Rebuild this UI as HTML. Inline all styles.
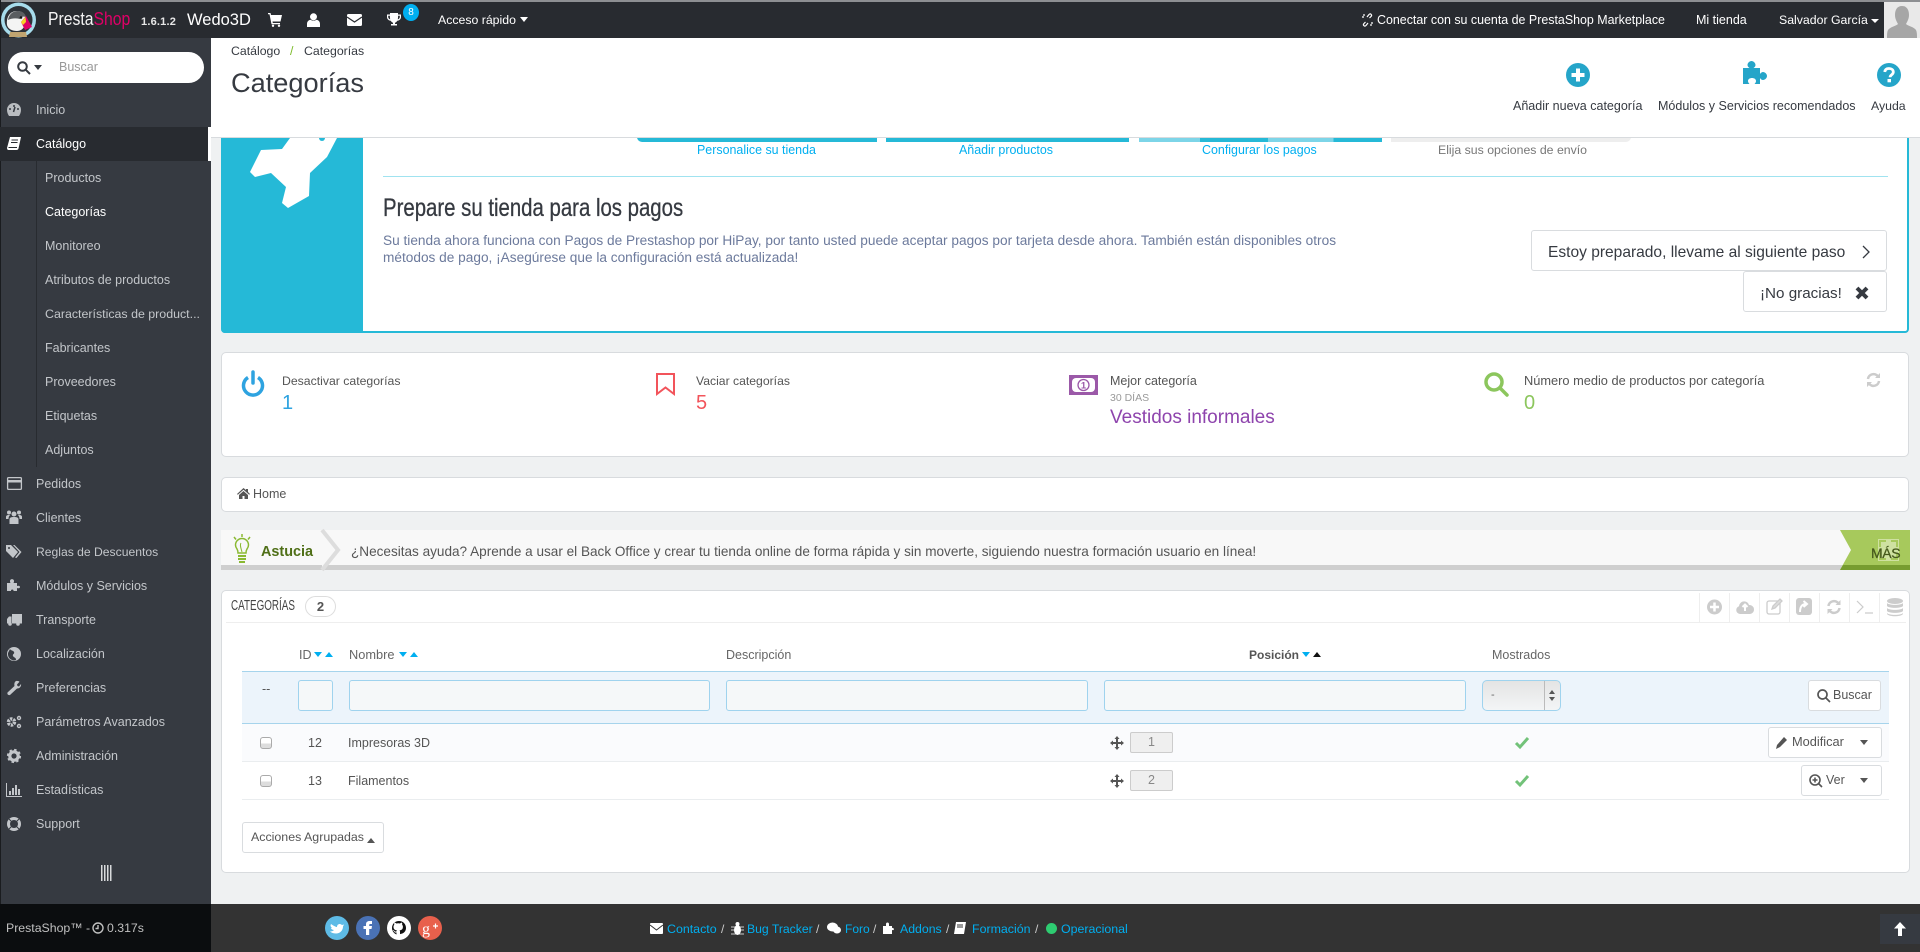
<!DOCTYPE html>
<html lang="es"><head><meta charset="utf-8"><title>Categorías</title>
<style>
html,body{margin:0;padding:0;width:1920px;height:952px;overflow:hidden;background:#eff1f2;font-family:"Liberation Sans",sans-serif;color:#555}
.a{position:absolute}
.t{position:absolute;white-space:nowrap;line-height:20px;height:20px;font-size:12.5px}
svg{position:absolute;overflow:visible}
.side{color:#c3c6ca;font-size:12.5px}
.panel{position:absolute;background:#fff;border:1px solid #d8dbde;border-radius:5px;box-sizing:border-box}
.inp{position:absolute;top:680px;height:31px;background:#f5f8f9;border:1px solid #9fd3ee;border-radius:3px;box-sizing:border-box}
.btn{position:absolute;background:#fff;border:1px solid #d9dcdf;border-radius:3px;box-sizing:border-box}
.lnk{color:#00aff0}
</style></head><body>

<!-- header -->
<div class="a" style="left:0;top:0;width:1920px;height:38px;background:#282b30"></div>
<div class="a" style="left:0;top:0;width:1920px;height:2px;background:#8d8f92"></div>
<svg style="left:0;top:0" width="40" height="40" viewBox="0 0 40 40">
<circle cx="18.500" cy="20" r="17.500" fill="#a7dcec"/><circle cx="18.500" cy="20" r="14" fill="#2e3238"/>
<path d="M7 25c-1-8 3-14 10-14 6 0 9 4 9 9 0 5-3 11-9 11-5 0-9-2-10-6z" fill="#f4f4f4"/>
<path d="M8 20c1-6 5-9 10-9 4 0 7 2 8 6-3-1-5 0-6 2-4-1-8-1-12 1z" fill="#5a5d60"/>
<circle cx="21" cy="17.500" r="1.300" fill="#111"/>
<path d="M21 22l5-6 6 11-7 3z" fill="#df0067"/><path d="M21 22l4.500-5 .5 5-3 3z" fill="#f5d327"/>
<path d="M10 32h16l1 5H9z" fill="#c0a470"/></svg>
<div class="t" style="left:48px;top:9px;font-size:18px;color:#f4f4f4;transform:scaleX(.875);transform-origin:0 50%">Presta<span style="color:#df0067">Shop</span></div>
<div class="t" style="left:141px;top:12px;font-size:11px;font-weight:bold;color:#e8e8e8;letter-spacing:.2px">1.6.1.2</div>
<div class="t" style="left:187px;top:10px;font-size:16.500px;color:#fff">Wedo3D</div>
<svg style="left:268px;top:13px" width="14" height="14" viewBox="0 0 14 14" fill="#fff"><path d="M0 0h2.500l.5 2h11l-1.500 6.500H4.500l.3 1.500H12v1.300H3.500L1.500 1.300H0z"/><circle cx="5" cy="12.800" r="1.200"/><circle cx="11" cy="12.800" r="1.200"/></svg>
<svg style="left:307px;top:13px" width="13" height="14" viewBox="0 0 13 14" fill="#fff"><circle cx="6.500" cy="3.800" r="3.500"/><path d="M0 14v-3c0-3 2-4 3.500-4.300 1.800 1.300 4.200 1.300 6 0C11 7 13 8 13 11v3z"/></svg>
<svg style="left:347px;top:14px" width="15" height="12" viewBox="0 0 15 12"><rect width="15" height="12" rx="1.500" fill="#fff"/><path d="M0 3l7.500 5L15 3" fill="none" stroke="#282b30" stroke-width="1.200"/></svg>
<svg style="left:387px;top:13px" width="14" height="14" viewBox="0 0 14 14" fill="#fff"><path d="M3 0h8v1.500h3V4c0 2-1.500 3.500-3.700 3.800C9.600 9 8.700 9.500 8 9.700V11h2v1.500H4V11h2V9.700C5.300 9.500 4.400 9 3.700 7.800 1.500 7.500 0 6 0 4V1.500h3zM1.200 2.700V4c0 1 .7 2 2 2.400-.2-1-.3-2.300-.3-3.700zm11.600 0h-1.700c0 1.400-.1 2.700-.3 3.700 1.300-.4 2-1.400 2-2.400z"/></svg>
<div class="a" style="left:403px;top:4px;width:16px;height:17px;border-radius:50%;background:#00aff0;color:#fff;font-size:10px;line-height:17px;text-align:center">8</div>
<div class="t" style="left:438px;top:10px;color:#fff;font-size:12.300px">Acceso rápido</div>
<div class="a" style="left:520px;top:17px;border:4px solid transparent;border-top:5px solid #fff;border-bottom:0"></div>
<svg style="left:1361px;top:13px" width="13" height="14" viewBox="0 0 13 14" fill="none" stroke="#fff" stroke-width="1.200"><path d="M6 4l2-2.500c1.500-1.500 3.500.5 2 2L8.500 5M7 10l-2 2.500c-1.500 1.500-3.500-.5-2-2L4.500 9M1 4h2M3 1v2M10 13v-2M12 10h-2"/></svg>
<div class="t" style="left:1377px;top:10px;color:#fff;font-size:12.430px">Conectar con su cuenta de PrestaShop Marketplace</div>
<div class="t" style="left:1696px;top:10px;color:#fff;font-size:12.500px">Mi tienda</div>
<div class="t" style="left:1779px;top:10px;color:#fff;font-size:12.300px">Salvador García</div>
<div class="a" style="left:1871px;top:19px;border:4px solid transparent;border-top:4px solid #fff;border-bottom:0"></div>
<div class="a" style="left:1884px;top:2px;width:36px;height:36px;background:#e9e9e9;overflow:hidden">
<svg style="left:0;top:0" width="36" height="36" viewBox="0 0 36 36" fill="#a6a6a6"><path d="M18 4c5 0 7 4 7 9 0 4-2 7-3 9 2 2 8 3 10 6 1 2 1 5 1 8H3c0-3 0-6 1-8 2-3 8-4 10-6-1-2-3-5-3-9 0-5 2-9 7-9z"/></svg></div>

<!-- page head -->
<div class="a" style="left:211px;top:38px;width:1709px;height:99px;background:#fff;border-bottom:1px solid #d8dbde;z-index:5"></div>
<div style="position:absolute;z-index:6;left:0;top:0">
<div class="t" style="left:231px;top:41px;color:#363a41;font-size:12.300px">Catálogo</div>
<div class="t" style="left:290px;top:41px;color:#7cbb2a;font-size:12.300px">/</div>
<div class="t" style="left:304px;top:41px;color:#363a41;font-size:12.300px">Categorías</div>
<div class="t" style="left:231px;top:71px;color:#363a41;font-size:27.200px;line-height:24px;height:24px;">Categorías</div>
<svg style="left:1566px;top:63px" width="24" height="24" viewBox="0 0 24 24"><circle cx="12" cy="12" r="12" fill="#25a5c9"/><path d="M12 5.500v13M5.500 12h13" stroke="#fff" stroke-width="4"/></svg>
<svg style="left:1743px;top:61px" width="27" height="26" viewBox="0 0 27 26" fill="#25a5c9"><path d="M0 7h6.500c-1.500-1-2-2-2-3 0-2 2-4 4-4s4 2 4 4c0 1-.5 2-2 3H17v6c1-1.500 2-2 3-2 2 0 4 2 4 4s-2 4-4 4c-1 0-2-.5-3-2v6h-5.500c1-1 1.500-2 1.500-3 0-2-2-3-4-3s-4 1-4 3c0 1 .5 2 1.500 3H0z"/></svg>
<svg style="left:1877px;top:63px" width="24" height="24" viewBox="0 0 24 24"><circle cx="12" cy="12" r="12" fill="#25a5c9"/><path d="M7.800 9c.2-2.500 2-3.500 4.200-3.500 2.500 0 4.300 1.400 4.300 3.500 0 2.800-3.200 2.800-3.200 5.200" fill="none" stroke="#fff" stroke-width="2.800"/><rect x="10.500" y="16" width="3.500" height="3.300" fill="#fff"/></svg>
<div class="t" style="left:1513px;top:96px;color:#363a41;font-size:12.530px">Añadir nueva categoría</div>
<div class="t" style="left:1658px;top:96px;color:#363a41;font-size:12.520px">Módulos y Servicios recomendados</div>
<div class="t" style="left:1871px;top:96px;color:#363a41;font-size:12.300px">Ayuda</div>
</div>

<!-- sidebar -->
<div class="a" style="left:0;top:38px;width:211px;height:866px;background:#363a41"></div>
<div class="a" style="left:0;top:0;width:1px;height:904px;background:#1a1c1f"></div>
<div class="a" style="left:8px;top:52px;width:196px;height:31px;border-radius:16px;background:#fff"></div>
<svg style="left:17px;top:61px" width="14" height="14" viewBox="0 0 14 14" fill="none" stroke="#363a41" stroke-width="2"><circle cx="5.500" cy="5.500" r="4.300"/><path d="M8.800 8.800L13 13"/></svg>
<div class="a" style="left:34px;top:65px;border:4px solid transparent;border-top:5px solid #363a41;border-bottom:0"></div>
<div class="t" style="left:59px;top:57px;color:#999;font-size:12.500px">Buscar</div>
<div class="a" style="left:0;top:127px;width:208px;height:34px;background:#282b30"></div>
<div class="a" style="left:208px;top:127px;width:3px;height:34px;background:#fff"></div>
<div class="a" style="left:36px;top:161px;width:1px;height:306px;background:#282b30"></div>
<div class="t side" style="left:36px;top:100px">Inicio</div>
<div class="t side" style="left:36px;top:134px;color:#fff">Catálogo</div>
<div class="t side" style="left:45px;top:168px">Productos</div>
<div class="t side" style="left:45px;top:202px;color:#fff">Categorías</div>
<div class="t side" style="left:45px;top:236px">Monitoreo</div>
<div class="t side" style="left:45px;top:270px">Atributos de productos</div>
<div class="t side" style="left:45px;top:304px;font-size:12.400px">Características de product...</div>
<div class="t side" style="left:45px;top:338px">Fabricantes</div>
<div class="t side" style="left:45px;top:372px">Proveedores</div>
<div class="t side" style="left:45px;top:406px">Etiquetas</div>
<div class="t side" style="left:45px;top:440px">Adjuntos</div>
<div class="t side" style="left:36px;top:474px">Pedidos</div>
<div class="t side" style="left:36px;top:508px">Clientes</div>
<div class="t side" style="left:36px;top:542px;font-size:12.150px">Reglas de Descuentos</div>
<div class="t side" style="left:36px;top:576px">Módulos y Servicios</div>
<div class="t side" style="left:36px;top:610px">Transporte</div>
<div class="t side" style="left:36px;top:644px">Localización</div>
<div class="t side" style="left:36px;top:678px">Preferencias</div>
<div class="t side" style="left:36px;top:712px">Parámetros Avanzados</div>
<div class="t side" style="left:36px;top:746px">Administración</div>
<div class="t side" style="left:36px;top:780px">Estadísticas</div>
<div class="t side" style="left:36px;top:814px">Support</div>
<!-- sidebar icons -->
<svg style="left:7px;top:103px" width="14" height="13" viewBox="0 0 14 13" fill="#b9bcc0"><path d="M7 0a7 7 0 0 1 7 7c0 2.500-1 4.500-2 6H2C1 11.500 0 9.500 0 7a7 7 0 0 1 7-7z"/><circle cx="7" cy="3" r="1" fill="#363a41"/><circle cx="3" cy="6" r="1" fill="#363a41"/><circle cx="11" cy="6" r="1" fill="#363a41"/><path d="M8 4L6.500 9" stroke="#363a41" stroke-width="1.500"/></svg>
<svg style="left:7px;top:137px" width="14" height="14" viewBox="0 0 14 14" fill="#fff"><path d="M3 0h11l-2.500 11.500c-.2.800-.8 1.500-2 1.500H1.500C.5 13 0 12 0 11z"/><path d="M4.500 3h6.500M4 5.500h6.500M1.500 10.500H10" stroke="#282b30" stroke-width="1"/></svg>
<svg style="left:7px;top:477px" width="15" height="13" viewBox="0 0 15 13" fill="none" stroke="#c3c6ca" stroke-width="1.300"><rect x=".6" y=".6" width="13.800" height="11.800" rx="1"/><rect x="0" y="3" width="15" height="2.500" fill="#c3c6ca" stroke="none"/></svg>
<svg style="left:6px;top:510px" width="16" height="14" viewBox="0 0 16 14" fill="#c3c6ca"><circle cx="8" cy="4" r="2.500"/><circle cx="3" cy="2.500" r="2"/><circle cx="13" cy="2.500" r="2"/><path d="M3.500 14V9.500C3.500 7.500 5 7 8 7s4.500.5 4.500 2.500V14zM0 9V7c0-1.500 1-2 3-2 .5 0 .8 0 1 .2C3 6 2.500 7 2.500 9zM16 9V7c0-1.500-1-2-3-2-.5 0-.8 0-1 .2 1 .8 1.500 1.800 1.500 3.800z"/></svg>
<svg style="left:6px;top:545px" width="16" height="13" viewBox="0 0 16 13" fill="#c3c6ca"><path d="M0 0h5l7 7-5 6-7-7z"/><path d="M7 0h1.500l7 7-5 6-1.500-.5 4.500-5.500z"/><circle cx="3" cy="3" r="1" fill="#363a41"/></svg>
<svg style="left:7px;top:578px" width="14" height="14" viewBox="0 0 14 14" fill="#c3c6ca"><path d="M0 5h3.500C3 4 3 3.500 3 3c0-2.500 4-2.500 4 0 0 .5 0 1-.5 2H10v3c1-.5 3-.5 3 1s-2 1.500-3 1v3H6.500c.5-2-3-2-2.500 0H0z"/></svg>
<svg style="left:7px;top:614px" width="15" height="12" viewBox="0 0 15 12" fill="#c3c6ca"><path d="M5 0h10v9.500H5zM0 5l2-2.500h2.500v7H0z"/><circle cx="3" cy="10" r="1.800"/><circle cx="11" cy="10" r="1.800"/></svg>
<svg style="left:7px;top:647px" width="14" height="14" viewBox="0 0 14 14"><circle cx="7" cy="7" r="7" fill="#c3c6ca"/><path d="M3 2c1 2 3 1 4 3s-2 2-1 4 3 1 3 4l-2 .5C3 13 .5 10 1 6z" fill="#363a41"/></svg>
<svg style="left:7px;top:681px" width="14" height="14" viewBox="0 0 14 14" fill="#c3c6ca"><path d="M9 0c2-.3 3 .3 3.500.8L10 3.500l.5 1.500L12 5.500l2-2.500c.5 2-1 4.500-4 4.500L3 14c-2 .5-3-1-2.500-2.500L7.500 5C7 3 7.500 .8 9 0z"/></svg>
<svg style="left:6px;top:715px" width="16" height="14" viewBox="0 0 16 14" fill="none" stroke="#c3c6ca"><circle cx="5.500" cy="7" r="3" stroke-width="3.500" stroke-dasharray="2.200 .9"/><circle cx="13" cy="3" r="1.500" stroke-width="1.400"/><circle cx="13" cy="11" r="1.500" stroke-width="1.400"/></svg>
<svg style="left:7px;top:749px" width="14" height="14" viewBox="0 0 14 14" fill="none"><circle cx="7" cy="7" r="4.200" stroke="#c3c6ca" stroke-width="3.200"/><circle cx="7" cy="7" r="6" stroke="#c3c6ca" stroke-width="2.200" stroke-dasharray="2.400 2.300"/></svg>
<svg style="left:6px;top:783px" width="16" height="14" viewBox="0 0 16 14" fill="#c3c6ca"><path d="M0 0h1v13h15v1H0z"/><rect x="3" y="8" width="2" height="4"/><rect x="6" y="5" width="2" height="7"/><rect x="9" y="2" width="2" height="10"/><rect x="12" y="6" width="2" height="6"/></svg>
<svg style="left:7px;top:817px" width="14" height="14" viewBox="0 0 14 14" fill="none"><circle cx="7" cy="7" r="5.500" stroke="#c3c6ca" stroke-width="3"/><path d="M2 2l3 3M12 2L9 5M2 12l3-3M12 12L9 9" stroke="#363a41" stroke-width="1"/></svg>
<svg style="left:101px;top:865px" width="11" height="16" fill="#d8dadc"><rect x="0" width="1.500" height="16"/><rect x="3" width="1.500" height="16"/><rect x="6" width="1.500" height="16"/><rect x="9" width="1.500" height="16"/></svg>

<!-- onboarding panel -->
<div class="a" style="left:221px;top:120px;width:1688px;height:213px;background:#fff;box-sizing:border-box;border:solid #25b9d7;border-width:0 2px 2px 0;border-radius:0 0 4px 4px"></div>
<div class="a" style="left:221px;top:120px;width:142px;height:213px;background:#25b9d7;border-radius:0 0 0 4px"></div>
<svg style="left:221px;top:120px" width="142" height="100" viewBox="221 120 142 100"><path d="M290 138l-8 11-21 1-11 22 5 5 16-4 15 14-4 16 6 5 21-12 1-23 17-16 10-19z" fill="#fff"/><circle cx="322" cy="138" r="3" fill="#25b9d7"/></svg>
<div class="a" style="left:637px;top:137px;width:240px;height:5px;background:#25b9d7;border-radius:0 0 0 6px"></div>
<div class="a" style="left:886px;top:137px;width:243px;height:5px;background:#25b9d7"></div>
<div class="a" style="left:1139px;top:137px;width:243px;height:5px;background:linear-gradient(90deg,#7dd5e8 0 25%,#25b9d7 25% 53%,#7dd5e8 53% 80%,#25b9d7 80%)"></div>
<div class="a" style="left:1391px;top:137px;width:240px;height:5px;background:#eee;border-radius:0 0 6px 0"></div>
<div class="t lnk" style="left:697px;top:140px;font-size:12.450px">Personalice su tienda</div>
<div class="t lnk" style="left:959px;top:140px;font-size:12.450px">Añadir productos</div>
<div class="t lnk" style="left:1202px;top:140px;font-size:12.450px">Configurar los pagos</div>
<div class="t" style="left:1438px;top:140px;font-size:12.300px;color:#777">Elija sus opciones de envío</div>
<div class="a" style="left:383px;top:176px;width:1505px;height:1px;background:#a0e3f0"></div>
<div class="t" style="left:383px;top:198px;font-size:25px;color:#363a41;transform:scaleX(.815);transform-origin:0 50%;-webkit-text-stroke:.3px #363a41">Prepare su tienda para los pagos</div>
<div class="t" style="left:383px;top:231px;font-size:13.660px;color:#6c7a9c">Su tienda ahora funciona con Pagos de Prestashop por HiPay, por tanto usted puede aceptar pagos por tarjeta desde ahora. También están disponibles otros</div>
<div class="t" style="left:383px;top:248px;font-size:13.660px;color:#6c7a9c">métodos de pago, ¡Asegúrese que la configuración está actualizada!</div>
<div class="btn" style="left:1531px;top:230px;width:356px;height:41px;border-radius:3px"></div>
<div class="t" style="left:1548px;top:243px;font-size:15.550px;color:#363a41">Estoy preparado, llevame al siguiente paso</div>
<svg style="left:1862px;top:245px" width="8" height="14" fill="none" stroke="#363a41" stroke-width="1.300"><path d="M1 1l6 6-6 6"/></svg>
<div class="btn" style="left:1743px;top:271px;width:144px;height:41px"></div>
<div class="t" style="left:1760px;top:284px;font-size:15.200px;color:#363a41">¡No gracias!</div>
<svg style="left:1855px;top:286px" width="14" height="14"><path d="M2 2l10 10M12 2L2 12" stroke="#363a41" stroke-width="4"/></svg>

<!-- KPI -->
<div class="panel" style="left:221px;top:352px;width:1688px;height:105px"></div>
<svg style="left:241px;top:372px" width="24" height="24" viewBox="0 0 24 24" fill="none" stroke="#2ea3e0" stroke-width="3.500"><path d="M7 5.500a9.500 9.500 0 1 0 10 0"/><path d="M12 0v11" stroke-linecap="round"/></svg>
<div class="t" style="left:282px;top:371px;color:#555;font-size:12.250px">Desactivar categorías</div>
<div class="t" style="left:282px;top:393px;font-size:20px;color:#2ea3e0">1</div>
<svg style="left:656px;top:373px" width="19" height="23" fill="none" stroke="#f2545b" stroke-width="2"><path d="M1 1h17v20l-8.500-6.500L1 21z"/></svg>
<div class="t" style="left:696px;top:371px;color:#555;font-size:12.200px">Vaciar categorías</div>
<div class="t" style="left:696px;top:393px;font-size:20px;color:#f2545b">5</div>
<svg style="left:1069px;top:375px" width="29" height="20" viewBox="0 0 29 20"><rect width="29" height="20" fill="#9b59a8"/><rect x="3" y="3" width="23" height="14" rx="4" fill="#fff"/><circle cx="14.500" cy="10" r="5.500" fill="none" stroke="#9b59a8" stroke-width="1.300"/><text x="14.500" y="13.500" font-size="9.500" font-family="Liberation Sans" font-weight="bold" text-anchor="middle" fill="#9b59a8">1</text></svg>
<div class="t" style="left:1110px;top:371px;color:#555">Mejor categoría</div>
<div class="t" style="left:1110px;top:388px;font-size:10.500px;color:#999">30 DÍAS</div>
<div class="t" style="left:1110px;top:408px;font-size:19px;color:#8e44ad">Vestidos informales</div>
<svg style="left:1484px;top:372px" width="25" height="25" fill="none" stroke="#8cc65d" stroke-width="3.500"><circle cx="10" cy="10" r="8"/><path d="M16 16l7 7" stroke-linecap="round"/></svg>
<div class="t" style="left:1524px;top:371px;color:#555;font-size:12.800px">Número medio de productos por categoría</div>
<div class="t" style="left:1524px;top:393px;font-size:20px;color:#8cc65d">0</div>
<svg style="left:1866px;top:372px" width="15" height="16" viewBox="0 0 15 16" fill="none" stroke="#ccc" stroke-width="2.500"><path d="M2 7a5.500 5.500 0 0 1 10-2.500M13 9a5.500 5.500 0 0 1-10 2.500"/><path d="M14 1v5H9zM1 15v-5h5z" fill="#ccc" stroke="none"/></svg>

<!-- breadcrumb -->
<div class="panel" style="left:221px;top:477px;width:1688px;height:35px"></div>
<svg style="left:237px;top:488px" width="13" height="11" viewBox="0 0 13 11" fill="#555"><path d="M6.500 0l2.500 2V1h2v3l2 2-.8.8L6.500 1.800.8 6.800 0 6zM2 7l4.500-4L11 7v4H7.500V8h-2v3H2z"/></svg>
<div class="t" style="left:253px;top:484px;color:#555">Home</div>

<!-- tip -->
<div class="a" style="left:221px;top:530px;width:1689px;height:40px;background:#f8f8f8"></div>
<div class="a" style="left:221px;top:565px;width:1689px;height:5px;background:#cfcfcf"></div>
<svg style="left:320px;top:530px" width="22" height="41"><path d="M2 0l16 20L2 40" fill="#f8f8f8" stroke="#ddd" stroke-width="4"/></svg>
<svg style="left:231px;top:534px" width="22" height="30" viewBox="0 0 22 30" fill="none" stroke="#8ab932" stroke-width="1.500"><path d="M11 0v3M3 3l2 2.500M19 3l-2 2.500"/><path d="M6 15c-1.500-2-1.500-3-1.500-4a6.500 6.500 0 0 1 13 0c0 1 0 2-1.500 4-1 1.500-1 3-1 4H7c0-1 0-2.500-1-4z"/><path d="M10 9c-1.500 2 0 5 1 9" stroke-width="1"/><path d="M7 22h8M7 25h8M8 28h6" stroke-width="2"/></svg>
<div class="t" style="left:261px;top:542px;font-size:14.400px;font-weight:bold;color:#4f6f17">Astucia</div>
<div class="t" style="left:351px;top:542px;font-size:13.570px;color:#555">¿Necesitas ayuda? Aprende a usar el Back Office y crear tu tienda online de forma rápida y sin moverte, siguiendo nuestra formación usuario en línea!</div>
<svg style="left:1840px;top:530px" width="70" height="40"><path d="M0 0h70v40H0l11-20z" fill="#a7c95c"/><path d="M3 35h67v5H0z" fill="#779c30"/></svg>
<svg style="left:1878px;top:539px" width="21" height="22"><rect width="21" height="22" fill="#cfe1a1"/><path d="M2 8V2h6M19 8V2h-6M2 14v6h6M19 14v6h-6" stroke="#a7c95c" stroke-width="2" fill="none"/></svg>
<div class="t" style="left:1871px;top:543px;font-size:14px;color:#46591c;-webkit-text-stroke:.3px #46591c;letter-spacing:-.4px">MÁS</div>

<!-- list panel -->
<div class="panel" style="left:221px;top:590px;width:1689px;height:283px"></div>
<div class="a" style="left:226px;top:622px;width:1680px;height:1px;background:#eee"></div>
<div class="t" style="left:231px;top:596px;font-size:14.500px;color:#444;transform:scaleX(.68);transform-origin:0 50%">CATEGORÍAS</div>
<div class="a" style="left:305px;top:596px;width:29px;height:19px;border:1px solid #ddd;border-radius:11px;text-align:center;font-size:13px;line-height:19px;font-weight:bold;color:#555">2</div>
<div class="a" style="left:1699px;top:593px;width:1px;height:29px;background:#eee;box-shadow:30px 0 #eee,60px 0 #eee,90px 0 #eee,120px 0 #eee,150px 0 #eee,180px 0 #eee"></div>
<svg style="left:1707px;top:599px" width="15" height="16"><circle cx="7.500" cy="8" r="7.500" fill="#ccc"/><path d="M7.500 3.500v9M3 8h9" stroke="#fff" stroke-width="2.500"/></svg>
<svg style="left:1736px;top:598px" width="18" height="17" viewBox="0 0 18 17"><path d="M4 16a4 4 0 0 1-1-7.800 5 5 0 0 1 1.500-3.200 5 5 0 0 1 8.500 2 4.500 4.500 0 0 1 1 9z" fill="#ccc"/><path d="M9 13V7M6.500 9L9 6.500 11.500 9" stroke="#fff" stroke-width="2" fill="none"/></svg>
<svg style="left:1766px;top:598px" width="17" height="17" fill="none" stroke="#ccc" stroke-width="1.300"><rect x="1" y="3" width="13" height="13" rx="2"/><path d="M6 11l1-3 7-7 2 2-7 7z" fill="#ddd"/></svg>
<svg style="left:1796px;top:598px" width="16" height="17"><rect width="16" height="17" rx="3" fill="#ccc"/><path d="M4 14c0-5 2-8 6-8M7.500 3L11 6l-3.500 3" stroke="#fff" stroke-width="2" fill="none"/></svg>
<svg style="left:1826px;top:599px" width="16" height="16" viewBox="0 0 15 16" fill="none" stroke="#ccc" stroke-width="2.500"><path d="M2 7a5.500 5.500 0 0 1 10-2.500M13 9a5.500 5.500 0 0 1-10 2.500"/><path d="M14 1v5H9zM1 15v-5h5z" fill="#ccc" stroke="none"/></svg>
<svg style="left:1856px;top:600px" width="17" height="14" fill="none" stroke="#ccc" stroke-width="1.200"><path d="M1 1l6 6-6 6M9 13h8"/></svg>
<svg style="left:1887px;top:598px" width="16" height="19" fill="#ccc"><ellipse cx="8" cy="3" rx="8" ry="3"/><path d="M0 5c2 2.500 14 2.500 16 0v3c-2 2.500-14 2.500-16 0zM0 10c2 2.500 14 2.500 16 0v3c-2 2.500-14 2.500-16 0zM0 15c2 2.500 14 2.500 16 0v1c-2 3-14 3-16 0z"/></svg>

<div class="t" style="left:299px;top:645px;color:#666">ID</div>
<div class="t" style="left:349px;top:645px;color:#666;font-size:12.800px">Nombre</div>
<div class="t" style="left:726px;top:645px;color:#666">Descripción</div>
<div class="t" style="left:1249px;top:645px;color:#555;font-weight:bold;font-size:12px">Posición</div>
<div class="t" style="left:1492px;top:645px;color:#666">Mostrados</div>
<svg style="left:0;top:0" width="1920" height="952" fill="#00aff0"><path d="M314 652h8l-4 5zM325 657h8l-4-5zM399 652h8l-4 5zM410 657h8l-4-5zM1302 652h8l-4 5z"/><path d="M1313 657h8l-4-5z" fill="#111"/></svg>

<div class="a" style="left:242px;top:671px;width:1647px;height:53px;box-sizing:border-box;background:#ecf4fb;border-top:1px solid #a6d4ec;border-bottom:1px solid #a6d4ec"></div>
<div class="t" style="left:262px;top:679px;color:#555">--</div>
<div class="inp" style="left:298px;width:35px"></div>
<div class="inp" style="left:349px;width:361px"></div>
<div class="inp" style="left:726px;width:362px"></div>
<div class="inp" style="left:1104px;width:362px"></div>
<div class="inp" style="left:1482px;width:79px;background:linear-gradient(#e4e4e4,#f3f5f6);border-radius:5px"></div>
<div class="a" style="left:1544px;top:681px;width:1px;height:29px;background:#bbb"></div>
<div class="t" style="left:1491px;top:685px;color:#666;font-size:11px">-</div>
<svg style="left:1549px;top:690px" width="6" height="12" fill="#555"><path d="M3 0l3 4H0zM3 11L0 7h6z"/></svg>
<div class="btn" style="left:1808px;top:680px;width:73px;height:31px"></div>
<svg style="left:1817px;top:689px" width="13" height="13" fill="none" stroke="#555" stroke-width="1.700"><circle cx="5.500" cy="5.500" r="4.500"/><path d="M9 9l4 4"/></svg>
<div class="t" style="left:1833px;top:685px;color:#555">Buscar</div>

<div class="a" style="left:242px;top:724px;width:1647px;height:38px;box-sizing:border-box;background:#fafbfd;border-bottom:1px solid #eaedef"></div>
<div class="a" style="left:242px;top:762px;width:1647px;height:38px;box-sizing:border-box;background:#fff;border-bottom:1px solid #eaedef"></div>
<div class="a" style="left:260px;top:737px;width:12px;height:12px;border:1px solid #aaa;border-radius:3px;background:linear-gradient(#fff 55%,#ddd 55%);box-sizing:border-box"></div>
<div class="a" style="left:260px;top:775px;width:12px;height:12px;border:1px solid #aaa;border-radius:3px;background:linear-gradient(#fff 55%,#ddd 55%);box-sizing:border-box"></div>
<div class="t" style="left:308px;top:733px;color:#555">12</div>
<div class="t" style="left:308px;top:771px;color:#555">13</div>
<div class="t" style="left:348px;top:733px;color:#555">Impresoras 3D</div>
<div class="t" style="left:348px;top:771px;color:#555">Filamentos</div>
<svg style="left:1110px;top:736px" width="14" height="14" fill="#555"><path d="M7 0l2.500 3H8v3h3V4.500l3 2.500-3 2.500V8H8v3h1.500L7 14l-2.500-3H6V8H3v1.500L0 7l3-2.500V6h3V3H4.500z"/></svg>
<svg style="left:1110px;top:774px" width="14" height="14" fill="#555"><path d="M7 0l2.500 3H8v3h3V4.500l3 2.500-3 2.500V8H8v3h1.500L7 14l-2.500-3H6V8H3v1.500L0 7l3-2.500V6h3V3H4.500z"/></svg>
<div class="a" style="left:1130px;top:732px;width:43px;height:21px;background:#efefef;border:1px solid #ccc;border-radius:2px;box-sizing:border-box;text-align:center;font-size:12.500px;line-height:19px;color:#888">1</div>
<div class="a" style="left:1130px;top:770px;width:43px;height:21px;background:#efefef;border:1px solid #ccc;border-radius:2px;box-sizing:border-box;text-align:center;font-size:12.500px;line-height:19px;color:#888">2</div>
<svg style="left:1515px;top:737px" width="14" height="12" fill="none" stroke="#72c279" stroke-width="3"><path d="M1 6l4 4 8-9"/></svg>
<svg style="left:1515px;top:775px" width="14" height="12" fill="none" stroke="#72c279" stroke-width="3"><path d="M1 6l4 4 8-9"/></svg>
<div class="btn" style="left:1768px;top:727px;width:114px;height:31px"></div>
<svg style="left:1776px;top:737px" width="12" height="12" fill="#555"><path d="M0 12l1-4 7-8 3 3-7 7z"/></svg>
<div class="t" style="left:1792px;top:732px;color:#555;font-size:12.800px">Modificar</div>
<div class="a" style="left:1860px;top:740px;border:4px solid transparent;border-top:5px solid #555;border-bottom:0"></div>
<div class="btn" style="left:1801px;top:765px;width:81px;height:31px"></div>
<svg style="left:1809px;top:774px" width="14" height="14" fill="none" stroke="#555" stroke-width="1.600"><circle cx="6" cy="6" r="5"/><path d="M9.500 9.500L13 13M3.500 6h5M6 3.500v5" /></svg>
<div class="t" style="left:1826px;top:770px;color:#555">Ver</div>
<div class="a" style="left:1860px;top:778px;border:4px solid transparent;border-top:5px solid #555;border-bottom:0"></div>
<div class="btn" style="left:242px;top:822px;width:142px;height:31px"></div>
<div class="t" style="left:251px;top:827px;color:#555;font-size:12.400px">Acciones Agrupadas</div>
<div class="a" style="left:367px;top:838px;border:4px solid transparent;border-bottom:5px solid #555;border-top:0"></div>

<!-- footer -->
<div class="a" style="left:0;top:904px;width:1920px;height:48px;background:#333"></div>
<div class="a" style="left:0;top:904px;width:211px;height:48px;background:#0b0d0f"></div>
<div class="t" style="left:6px;top:918px;color:#c0c0c0;font-size:12.300px">PrestaShop™ -</div>
<svg style="left:92px;top:922px" width="12" height="12" fill="none" stroke="#c0c0c0" stroke-width="1.400"><circle cx="6" cy="6" r="5"/><path d="M6 3v3.500H3.500"/></svg>
<div class="t" style="left:107px;top:918px;color:#c0c0c0;font-size:12.300px">0.317s</div>
<svg style="left:325px;top:916px" width="118" height="24"><circle cx="12" cy="12" r="12" fill="#5ebbe6"/><circle cx="43" cy="12" r="12" fill="#4a72b5"/><circle cx="74" cy="12" r="12" fill="#fff"/><circle cx="105" cy="12" r="12" fill="#e8604c"/>
<path d="M6 8c3 2 5 3 6 3 0-3 3-4 5-2l2-.5-1 2c0 4-3 7-7 7-2 0-4-.5-6-2 2 0 3-.5 4-1.500-2 0-3-1.500-3-2 1 0 1 0 1 0C6 11 5 10 6 8z" fill="#fff"/>
<path d="M41 19v-6h-2.500v-3H41V8.500C41 6 42.500 5 44.500 5H47v3h-1.800c-.7 0-1 .4-1 1v1H47l-.5 3h-2.300v6z" fill="#fff"/>
<path d="M74 5c-4 0-7 3-7 7 0 3 2 5.500 4.500 6.500v-2c-2 .4-2.500-1-2.500-1-.5-1-1-1-1-1-.7-.5 0-.5 0-.5.8 0 1.200.8 1.200.8.700 1.200 1.800.8 2.300.6 0-.5.300-.9.500-1.100-1.800-.2-3.500-.8-3.500-3.600 0-.8.300-1.500.8-2-.1-.2-.3-1 .1-2 0 0 .6-.2 2 .8a7 7 0 0 1 3.600 0c1.400-1 2-.8 2-.8.400 1 .2 1.800.1 2 .5.500.8 1.200.8 2 0 2.800-1.700 3.400-3.400 3.600.3.300.5.700.5 1.400v2.400C79 17.500 81 15 81 12c0-4-3-7-7-7z" fill="#111"/>
<text x="97" y="18" font-size="16" font-family="Liberation Serif" fill="#fff">g</text><path d="M108 10h5M110.500 7.500v5" stroke="#fff" stroke-width="1.200"/></svg>

<svg style="left:650px;top:923px" width="13" height="11"><rect width="13" height="11" rx="1" fill="#fff"/><path d="M0 2l6.500 5L13 2" stroke="#333" fill="none"/></svg>
<div class="t lnk" style="left:667px;top:919px;font-size:12.400px">Contacto</div>
<div class="t" style="left:721px;top:919px;font-size:12px;color:#ccc">/</div>
<svg style="left:731px;top:922px" width="13" height="13" fill="#fff"><ellipse cx="6.500" cy="8" rx="3.500" ry="5"/><circle cx="6.500" cy="2" r="2"/><path d="M0 5h13M0 8h13M0 12h13" stroke="#fff" stroke-width=".8"/></svg>
<div class="t lnk" style="left:747px;top:919px;font-size:12.200px">Bug Tracker</div>
<div class="t" style="left:816px;top:919px;font-size:12px;color:#ccc">/</div>
<svg style="left:827px;top:922px" width="14" height="12" fill="#fff"><ellipse cx="5.500" cy="5" rx="5.500" ry="4.500"/><ellipse cx="10" cy="8" rx="4" ry="3.500"/></svg>
<div class="t lnk" style="left:845px;top:919px;font-size:12px">Foro</div>
<div class="t" style="left:873px;top:919px;font-size:12px;color:#ccc">/</div>
<svg style="left:883px;top:922px" width="12" height="12" fill="#fff"><path d="M0 4h3V2c0-2 3-2 3 0v2h3v2c2-1 3 3 0 2v4H0z"/></svg>
<div class="t lnk" style="left:900px;top:919px;font-size:12.300px">Addons</div>
<div class="t" style="left:946px;top:919px;font-size:12px;color:#ccc">/</div>
<svg style="left:954px;top:922px" width="12" height="13" fill="#fff"><path d="M2 0h10l-2 12H0z"/><path d="M3 3h6M3 5h6" stroke="#333"/></svg>
<div class="t lnk" style="left:972px;top:919px;font-size:12.400px">Formación</div>
<div class="t" style="left:1035px;top:919px;font-size:12px;color:#ccc">/</div>
<div class="a" style="left:1046px;top:923px;width:11px;height:11px;border-radius:50%;background:#2ecc71"></div>
<div class="t lnk" style="left:1061px;top:919px;font-size:12.400px">Operacional</div>
<div class="a" style="left:1880px;top:914px;width:40px;height:30px;background:#363a41"></div>
<svg style="left:1894px;top:922px" width="12" height="14" fill="#fff"><path d="M6 0l6 6.500H8V14H4V6.500H0z"/></svg>
</body></html>
